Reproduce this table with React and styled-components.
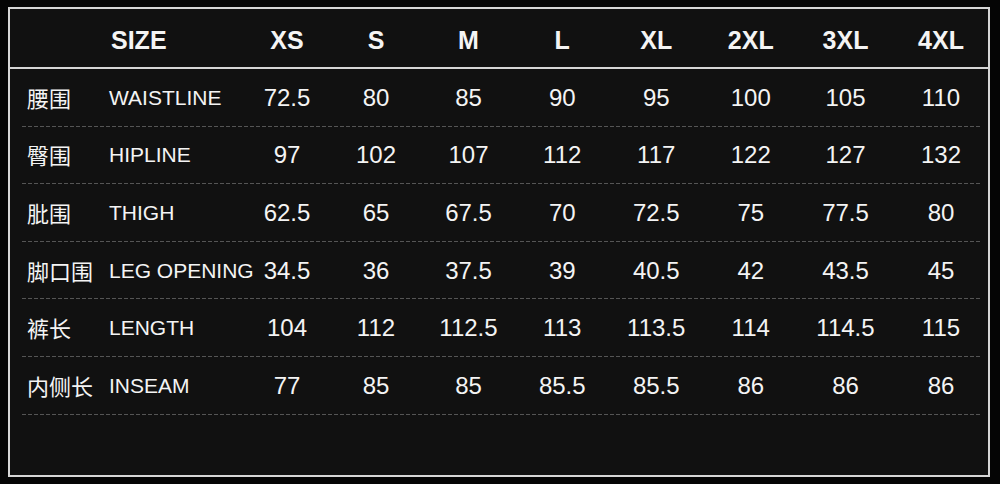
import React from 'react';
import styled, { createGlobalStyle } from 'styled-components';

const GlobalStyle = createGlobalStyle`
  html, body {
    margin: 0;
    padding: 0;
    background: #050505;
  }
  body {
    font-family: "Liberation Sans", Arial, "Noto Sans CJK SC", sans-serif;
    color: #f4f4f4;
  }
`;

const COLS = '85px 136.5px 87px 91px 94px 93.5px 94.5px 94.5px 95px 96px';

const Page = styled.div`
  width: 1000px;
  height: 484px;
  padding: 7px 10px 7px 8px;
  box-sizing: border-box;
`;

const Panel = styled.div`
  width: 982px;
  height: 470px;
  box-sizing: border-box;
  border: 2px solid #d6d6d6;
  background: #111111;
  display: flex;
  flex-direction: column;
`;

const Header = styled.div`
  height: 60px;
  box-sizing: border-box;
  border-bottom: 2px solid #d6d6d6;
  padding: 0 8px 0 12px;
  display: grid;
  grid-template-columns: ${COLS};
  align-items: center;
`;

const HeadCell = styled.div`
  font-size: 25px;
  font-weight: 700;
  text-align: ${({ left }) => (left ? 'left' : 'center')};
  padding-left: ${({ left }) => (left ? '4px' : '0')};
  padding-top: 4px;
  white-space: nowrap;
`;

const Body = styled.div`
  padding: 0 8px 0 12px;
`;

const Row = styled.div`
  height: 57.6px;
  box-sizing: border-box;
  display: grid;
  grid-template-columns: ${COLS};
  align-items: center;
  background-image: repeating-linear-gradient(
    to right,
    #555555 0 4px,
    transparent 4px 6px
  );
  background-size: 100% 1px;
  background-repeat: no-repeat;
  background-position: left bottom;
`;

const ZhCell = styled.div`
  font-family: "Noto Sans CJK SC", "Liberation Sans", sans-serif;
  font-size: 22px;
  line-height: 1;
  padding-left: 5px;
  padding-bottom: 2px;
  white-space: nowrap;
`;

const EnCell = styled.div`
  font-size: 21px;
  padding-left: 2px;
  white-space: nowrap;
`;

const ValCell = styled.div`
  font-size: 24px;
  text-align: center;
  white-space: nowrap;
`;

const sizes = ['XS', 'S', 'M', 'L', 'XL', '2XL', '3XL', '4XL'];

const rows = [
  { zh: '腰围', en: 'WAISTLINE', vals: ['72.5', '80', '85', '90', '95', '100', '105', '110'] },
  { zh: '臀围', en: 'HIPLINE', vals: ['97', '102', '107', '112', '117', '122', '127', '132'] },
  { zh: '肶围', en: 'THIGH', vals: ['62.5', '65', '67.5', '70', '72.5', '75', '77.5', '80'] },
  { zh: '脚口围', en: 'LEG OPENING', vals: ['34.5', '36', '37.5', '39', '40.5', '42', '43.5', '45'] },
  { zh: '裤长', en: 'LENGTH', vals: ['104', '112', '112.5', '113', '113.5', '114', '114.5', '115'] },
  { zh: '内侧长', en: 'INSEAM', vals: ['77', '85', '85', '85.5', '85.5', '86', '86', '86'] },
];

export default function App() {
  return (
    <>
      <GlobalStyle />
      <Page>
        <Panel>
          <Header>
            <div />
            <HeadCell left>SIZE</HeadCell>
            {sizes.map((s) => (
              <HeadCell key={s}>{s}</HeadCell>
            ))}
          </Header>
          <Body>
            {rows.map((r) => (
              <Row key={r.en}>
                <ZhCell>{r.zh}</ZhCell>
                <EnCell>{r.en}</EnCell>
                {r.vals.map((v, i) => (
                  <ValCell key={i}>{v}</ValCell>
                ))}
              </Row>
            ))}
          </Body>
        </Panel>
      </Page>
    </>
  );
}
